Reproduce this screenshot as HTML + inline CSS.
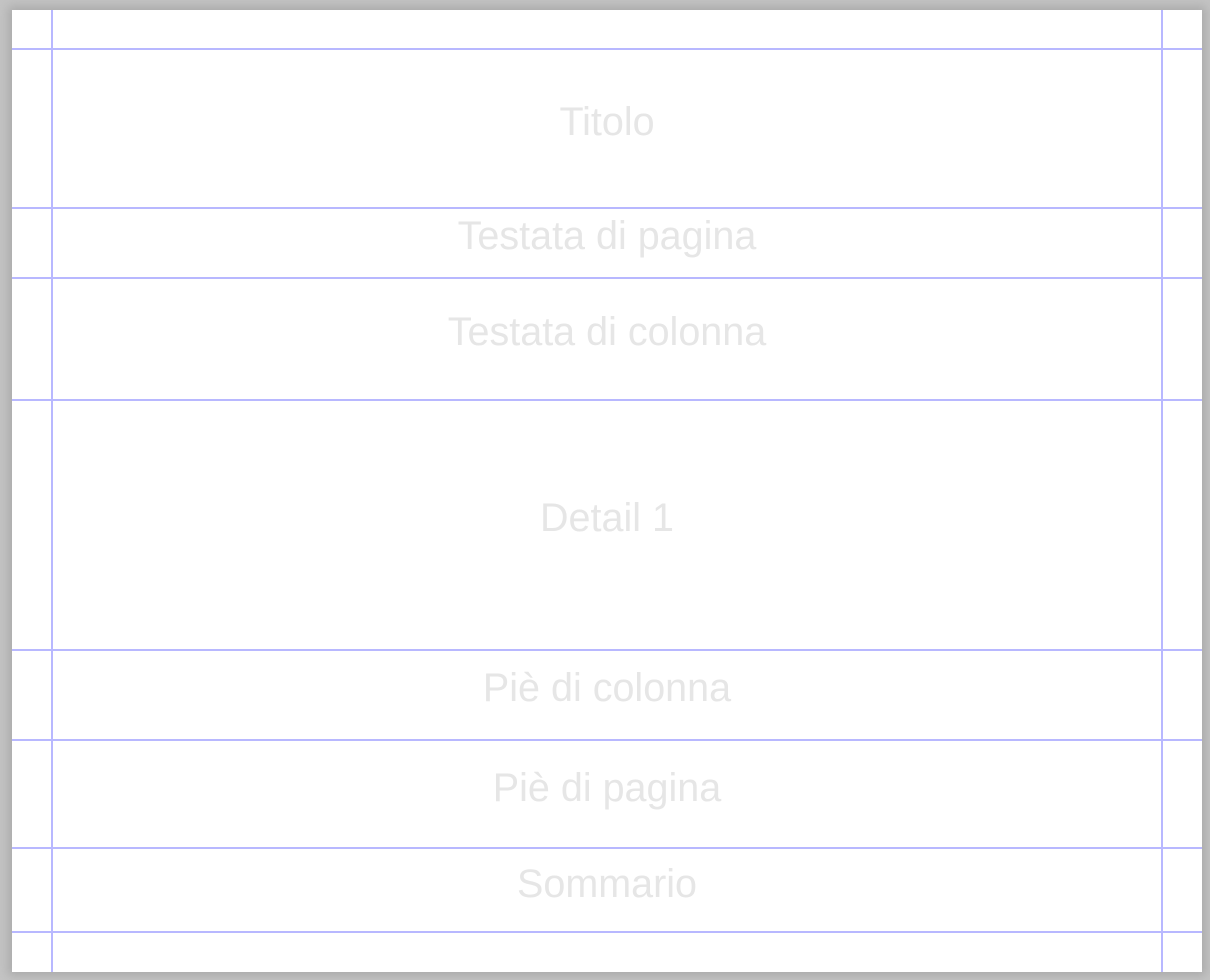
<!DOCTYPE html>
<html><head><style>
html,body{margin:0;padding:0;width:1210px;height:980px;overflow:hidden;background:#c4c4c4;}
.pg{position:absolute;left:12px;top:10px;width:1190px;height:962px;background:#fff;box-shadow:0 0 10px 4px #aaa;}
.h{position:absolute;left:12px;width:1190px;height:2px;background:#b8b8ff;}
.v{position:absolute;top:10px;height:962px;width:2px;background:#b8b8ff;}
.t{position:absolute;left:52px;width:1110px;text-align:center;font-family:"Liberation Sans",sans-serif;font-size:39.5px;color:#e6e6e6;line-height:40px;}
</style></head><body>
<div class="pg"></div>
<div class="h" style="top:48px"></div>
<div class="h" style="top:207px"></div>
<div class="h" style="top:277px"></div>
<div class="h" style="top:399px"></div>
<div class="h" style="top:649px"></div>
<div class="h" style="top:739px"></div>
<div class="h" style="top:847px"></div>
<div class="h" style="top:931px"></div>
<div class="v" style="left:51px"></div>
<div class="v" style="left:1161px"></div>
<div class="t" style="top:102px">Titolo</div>
<div class="t" style="top:216px">Testata di pagina</div>
<div class="t" style="top:312px">Testata di colonna</div>
<div class="t" style="top:498px">Detail 1</div>
<div class="t" style="top:668px">Piè di colonna</div>
<div class="t" style="top:768px">Piè di pagina</div>
<div class="t" style="top:864px">Sommario</div>
</body></html>
